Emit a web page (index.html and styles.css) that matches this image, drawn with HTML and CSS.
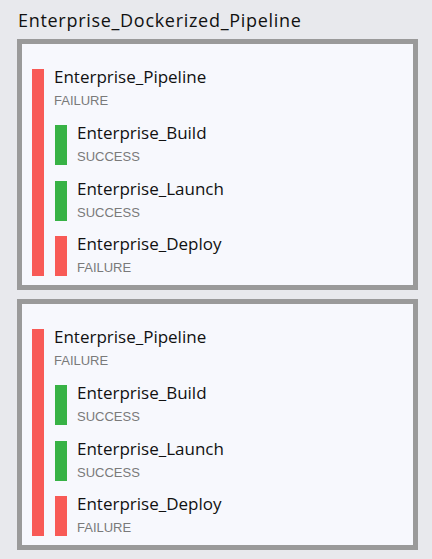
FILE: index.html
```html
<!DOCTYPE html>
<html>
<head>
<meta charset="utf-8">
<link rel="stylesheet" href="styles.css">
</head>
<body>
<div class="page">
  <h1 class="title">Enterprise_Dockerized_Pipeline</h1>
  <div class="card">
    <div class="row">
      <div class="bar fail"></div>
      <div class="content">
        <div class="name">Enterprise_Pipeline</div>
        <div class="status">FAILURE</div>
        <div class="children">
          <div class="row child"><div class="bar ok"></div><div class="content"><div class="name">Enterprise_Build</div><div class="status">SUCCESS</div></div></div>
          <div class="row child"><div class="bar ok"></div><div class="content"><div class="name">Enterprise_Launch</div><div class="status">SUCCESS</div></div></div>
          <div class="row child"><div class="bar fail"></div><div class="content"><div class="name">Enterprise_Deploy</div><div class="status">FAILURE</div></div></div>
        </div>
      </div>
    </div>
  </div>
  <div class="card">
    <div class="row">
      <div class="bar fail"></div>
      <div class="content">
        <div class="name">Enterprise_Pipeline</div>
        <div class="status">FAILURE</div>
        <div class="children">
          <div class="row child"><div class="bar ok"></div><div class="content"><div class="name">Enterprise_Build</div><div class="status">SUCCESS</div></div></div>
          <div class="row child"><div class="bar ok"></div><div class="content"><div class="name">Enterprise_Launch</div><div class="status">SUCCESS</div></div></div>
          <div class="row child"><div class="bar fail"></div><div class="content"><div class="name">Enterprise_Deploy</div><div class="status">FAILURE</div></div></div>
        </div>
      </div>
    </div>
  </div>
</div>
</body>
</html>
```
FILE: styles.css
```css
html, body {
  margin: 0;
  padding: 0;
  background: #e8e9ed;
}
.page {
  padding: 8px 14px 0 17px;
  font-family: "Open Sans", sans-serif;
  color: #111;
}
.title {
  margin: 0 0 0 1px;
  font-size: 18px;
  font-weight: 400;
  letter-spacing: 0.7px;
  line-height: 24px;
  height: 31px;
}
.card {
  border: 5px solid #9a9a9a;
  background: #f7f8fd;
  padding: 25px 10px 9px 10px;
  margin-bottom: 9px;
}
.row {
  display: flex;
  gap: 10px;
}
.bar {
  width: 12px;
  flex: none;
}
.fail { background: #f85a56; }
.ok { background: #37b245; }
.content {
  flex: 1;
  min-width: 0;
}
.name {
  font-size: 17px;
  line-height: 16px;
  color: #111;
}
.status {
  margin-top: 8px;
  font-family: "Liberation Sans", Arial, sans-serif;
  font-size: 13px;
  line-height: 16px;
  color: #7a7a7a;
}
.children {
  margin-top: 16px;
  margin-left: 1px;
  display: flex;
  flex-direction: column;
  gap: 15.5px;
}
```
